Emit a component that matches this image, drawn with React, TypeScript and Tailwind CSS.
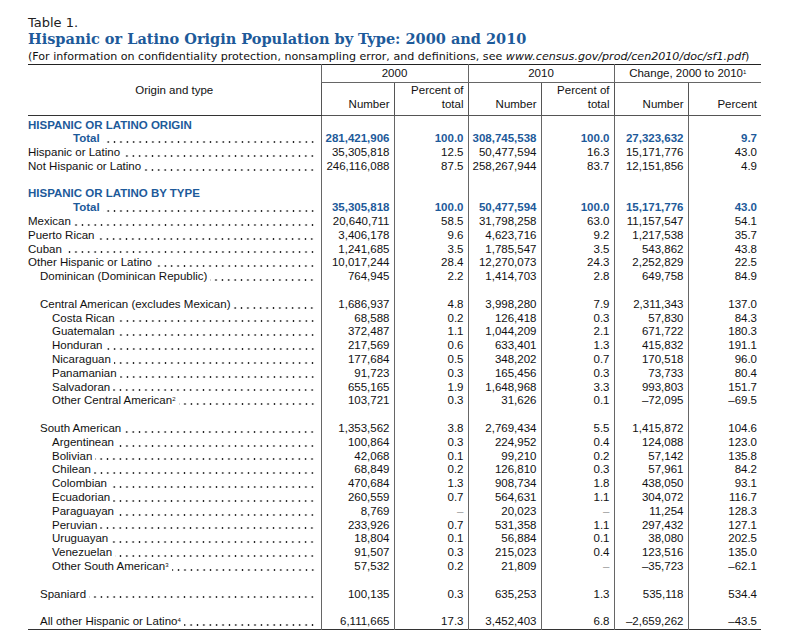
import React from "react";

type Row =
  | { kind: "blank" }
  | { kind: "section"; label: string }
  | { kind: "row"; label: string; level: number; sup?: string; total?: boolean; vals: string[] };

const rows: Row[] = [
  { kind: "section", label: "HISPANIC OR LATINO ORIGIN" },
  { kind: "row", label: "Total", level: 0, total: true, vals: ["281,421,906", "100.0", "308,745,538", "100.0", "27,323,632", "9.7"] },
  { kind: "row", label: "Hispanic or Latino", level: 0, vals: ["35,305,818", "12.5", "50,477,594", "16.3", "15,171,776", "43.0"] },
  { kind: "row", label: "Not Hispanic or Latino", level: 0, vals: ["246,116,088", "87.5", "258,267,944", "83.7", "12,151,856", "4.9"] },
  { kind: "blank" },
  { kind: "section", label: "HISPANIC OR LATINO BY TYPE" },
  { kind: "row", label: "Total", level: 0, total: true, vals: ["35,305,818", "100.0", "50,477,594", "100.0", "15,171,776", "43.0"] },
  { kind: "row", label: "Mexican", level: 0, vals: ["20,640,711", "58.5", "31,798,258", "63.0", "11,157,547", "54.1"] },
  { kind: "row", label: "Puerto Rican", level: 0, vals: ["3,406,178", "9.6", "4,623,716", "9.2", "1,217,538", "35.7"] },
  { kind: "row", label: "Cuban", level: 0, vals: ["1,241,685", "3.5", "1,785,547", "3.5", "543,862", "43.8"] },
  { kind: "row", label: "Other Hispanic or Latino", level: 0, vals: ["10,017,244", "28.4", "12,270,073", "24.3", "2,252,829", "22.5"] },
  { kind: "row", label: "Dominican (Dominican Republic)", level: 1, vals: ["764,945", "2.2", "1,414,703", "2.8", "649,758", "84.9"] },
  { kind: "blank" },
  { kind: "row", label: "Central American (excludes Mexican)", level: 1, vals: ["1,686,937", "4.8", "3,998,280", "7.9", "2,311,343", "137.0"] },
  { kind: "row", label: "Costa Rican", level: 2, vals: ["68,588", "0.2", "126,418", "0.3", "57,830", "84.3"] },
  { kind: "row", label: "Guatemalan", level: 2, vals: ["372,487", "1.1", "1,044,209", "2.1", "671,722", "180.3"] },
  { kind: "row", label: "Honduran", level: 2, vals: ["217,569", "0.6", "633,401", "1.3", "415,832", "191.1"] },
  { kind: "row", label: "Nicaraguan", level: 2, vals: ["177,684", "0.5", "348,202", "0.7", "170,518", "96.0"] },
  { kind: "row", label: "Panamanian", level: 2, vals: ["91,723", "0.3", "165,456", "0.3", "73,733", "80.4"] },
  { kind: "row", label: "Salvadoran", level: 2, vals: ["655,165", "1.9", "1,648,968", "3.3", "993,803", "151.7"] },
  { kind: "row", label: "Other Central American", sup: "2", level: 2, vals: ["103,721", "0.3", "31,626", "0.1", "–72,095", "–69.5"] },
  { kind: "blank" },
  { kind: "row", label: "South American", level: 1, vals: ["1,353,562", "3.8", "2,769,434", "5.5", "1,415,872", "104.6"] },
  { kind: "row", label: "Argentinean", level: 2, vals: ["100,864", "0.3", "224,952", "0.4", "124,088", "123.0"] },
  { kind: "row", label: "Bolivian", level: 2, vals: ["42,068", "0.1", "99,210", "0.2", "57,142", "135.8"] },
  { kind: "row", label: "Chilean", level: 2, vals: ["68,849", "0.2", "126,810", "0.3", "57,961", "84.2"] },
  { kind: "row", label: "Colombian", level: 2, vals: ["470,684", "1.3", "908,734", "1.8", "438,050", "93.1"] },
  { kind: "row", label: "Ecuadorian", level: 2, vals: ["260,559", "0.7", "564,631", "1.1", "304,072", "116.7"] },
  { kind: "row", label: "Paraguayan", level: 2, vals: ["8,769", "–", "20,023", "–", "11,254", "128.3"] },
  { kind: "row", label: "Peruvian", level: 2, vals: ["233,926", "0.7", "531,358", "1.1", "297,432", "127.1"] },
  { kind: "row", label: "Uruguayan", level: 2, vals: ["18,804", "0.1", "56,884", "0.1", "38,080", "202.5"] },
  { kind: "row", label: "Venezuelan", level: 2, vals: ["91,507", "0.3", "215,023", "0.4", "123,516", "135.0"] },
  { kind: "row", label: "Other South American", sup: "3", level: 2, vals: ["57,532", "0.2", "21,809", "–", "–35,723", "–62.1"] },
  { kind: "blank" },
  { kind: "row", label: "Spaniard", level: 1, vals: ["100,135", "0.3", "635,253", "1.3", "535,118", "534.4"] },
  { kind: "blank" },
  { kind: "row", label: "All other Hispanic or Latino", sup: "4", level: 1, vals: ["6,111,665", "17.3", "3,452,403", "6.8", "–2,659,262", "–43.5"] },
];

const indent = ["pl-0", "pl-[12px]", "pl-[24px]"];
const cell = "h-[13.8px] p-0 pr-[4px] text-right align-middle border-l border-[#666]";
// dotted leader, drawn as a repeating dot pattern that ends at the column edge
const leader =
  "flex-1 ml-[3px] mr-[5px] bg-[radial-gradient(circle,#222_0.8px,transparent_1.1px)] bg-size-[6.4px_4px] bg-repeat-x bg-position-[right_bottom_2px]";

const App = () => {
  return (
    <div className="min-h-screen bg-white pl-[28px] pt-[13px] text-[#111] font-['Liberation_Sans',Arial,sans-serif]">
      <div className="w-[733px]">
        <div className="pt-[3px] font-['DejaVu_Sans',sans-serif] text-[13px] leading-[13px] text-[#222]">Table 1.</div>
        <h1 className="font-['DejaVu_Serif',serif] font-bold text-[14.5px] leading-[20px] text-[#1d5a9a]">
          Hispanic or Latino Origin Population by Type: 2000 and 2010
        </h1>
        <p className="font-['DejaVu_Sans',sans-serif] text-[11.1px] leading-[15px] text-[#111] whitespace-nowrap">
          (For information on confidentiality protection, nonsampling error, and definitions, see{" "}
          <i>www.census.gov/prod/cen2010/doc/sf1.pdf</i>)
        </p>

        <table className="w-[733px] table-fixed border-collapse border-t border-[#222] text-[11.5px] leading-[13.8px]">
          <colgroup>
            <col className="w-[293px]" />
            <col className="w-[73px]" />
            <col className="w-[74px]" />
            <col className="w-[73px]" />
            <col className="w-[73px]" />
            <col className="w-[74px]" />
            <col className="w-[73px]" />
          </colgroup>
          <thead>
            <tr className="h-[18px]">
              <th rowSpan={2} className="p-0 pt-[2px] font-normal text-center align-middle border-b border-[#333]">
                Origin and type
              </th>
              <th colSpan={2} className="p-0 font-normal text-center border-l border-b border-[#666]">2000</th>
              <th colSpan={2} className="p-0 font-normal text-center border-l border-b border-[#666]">2010</th>
              <th colSpan={2} className="p-0 font-normal text-center border-l border-b border-[#666]">
                Change, 2000 to 2010<sup className="text-[6px]">1</sup>
              </th>
            </tr>
            <tr className="h-[33px]">
              {["Number", "Percent of total", "Number", "Percent of total", "Number", "Percent"].map((h, i) => (
                <th key={i} className="p-0 pr-[4px] pb-[3px] font-normal text-right align-bottom border-l border-b border-[#555]">
                  {h === "Percent of total" ? (
                    <>
                      Percent of
                      <br />
                      total
                    </>
                  ) : (
                    h
                  )}
                </th>
              ))}
            </tr>
          </thead>
          <tbody className="border-b border-[#333]">
            <tr className="h-[3px]">
              <td className="p-0" />
              {[0, 1, 2, 3, 4, 5].map((i) => (
                <td key={i} className="p-0 border-l border-[#666]" />
              ))}
            </tr>
            {rows.map((r, idx) => {
              if (r.kind === "blank") {
                return (
                  <tr key={idx}>
                    <td className="h-[13.8px] p-0" />
                    {[0, 1, 2, 3, 4, 5].map((i) => (
                      <td key={i} className={cell} />
                    ))}
                  </tr>
                );
              }
              if (r.kind === "section") {
                return (
                  <tr key={idx}>
                    <td className="h-[13.8px] p-0 font-bold text-[#1d5a9a] whitespace-nowrap">{r.label}</td>
                    {[0, 1, 2, 3, 4, 5].map((i) => (
                      <td key={i} className={cell} />
                    ))}
                  </tr>
                );
              }
              return (
                <tr key={idx}>
                  <td className="h-[13.8px] p-0">
                    <div className={`flex h-[13.8px] ${r.total ? "pl-[45px]" : indent[r.level]}`}>
                      <span className={`whitespace-nowrap ${r.total ? "font-bold text-[#1d5a9a]" : ""}`}>
                        {r.label}
                        {r.sup && <sup className="text-[6px]">{r.sup}</sup>}
                      </span>
                      <span className={leader} />
                    </div>
                  </td>
                  {r.vals.map((v, i) => (
                    <td
                      key={i}
                      className={`${cell} ${r.total ? "font-bold text-[#1d5a9a]" : ""} ${v === "–" ? "text-[#999]" : ""}`}
                    >
                      {v}
                    </td>
                  ))}
                </tr>
              );
            })}
          </tbody>
        </table>
      </div>
    </div>
  );
};

export default App;
